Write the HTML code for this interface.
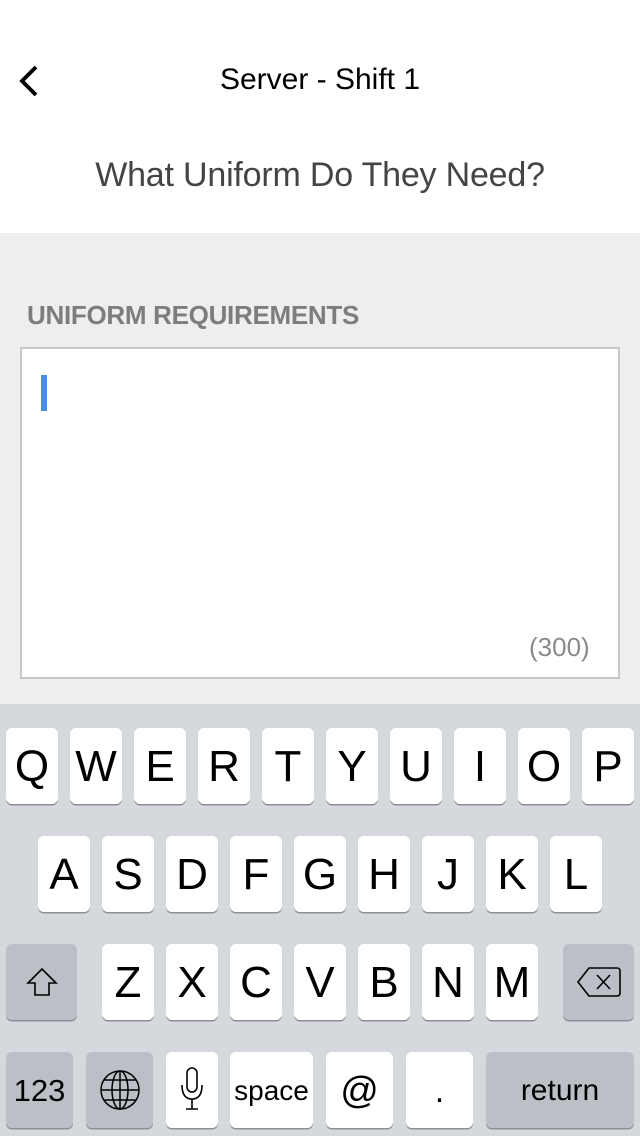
<!DOCTYPE html>
<html><head><meta charset="utf-8"><style>
*{margin:0;padding:0;box-sizing:border-box}
body{width:640px;height:1136px;position:relative;overflow:hidden;background:#fff;font-family:"Liberation Sans",sans-serif}
.abs{position:absolute}
.k{position:absolute;background:#fff;border-radius:6px;box-shadow:0 1.5px 0 #8e9096;text-align:center;color:#000;font-size:44px;line-height:78px;height:76px;width:52px}
.g{background:#bcc0c6}
</style></head><body>
<svg class="abs" style="left:16px;top:64px" width="26" height="36"><path d="M20 3 L6 17 L20 31" stroke="#000" stroke-width="3.8" fill="none"/></svg>
<div class="abs" style="left:0;width:640px;top:63px;text-align:center;font-size:30px;color:#000">Server - Shift 1</div>
<div class="abs" style="left:0;width:640px;top:156px;text-align:center;font-size:34px;color:#444;letter-spacing:-0.2px">What Uniform Do They Need?</div>
<div class="abs" style="left:0;top:233px;width:640px;height:471px;background:#eeeeee"></div>
<div class="abs" style="left:27px;top:300px;font-size:26px;font-weight:bold;color:#7d7d7d;letter-spacing:-0.3px">UNIFORM REQUIREMENTS</div>
<div class="abs" style="left:20px;top:347px;width:600px;height:332px;background:#fff;border:2px solid #c9c9c9"></div>
<div class="abs" style="left:41px;top:375px;width:6px;height:36px;background:#4a90e2"></div>
<div class="abs" style="left:529px;top:632px;font-size:26px;color:#8a8a8a">(300)</div>
<div class="abs" style="left:0;top:704px;width:640px;height:432px;background:#d5d8dc"></div>
<div class="k" style="left:6px;top:728px">Q</div><div class="k" style="left:70px;top:728px">W</div><div class="k" style="left:134px;top:728px">E</div><div class="k" style="left:198px;top:728px">R</div><div class="k" style="left:262px;top:728px">T</div><div class="k" style="left:326px;top:728px">Y</div><div class="k" style="left:390px;top:728px">U</div><div class="k" style="left:454px;top:728px">I</div><div class="k" style="left:518px;top:728px">O</div><div class="k" style="left:582px;top:728px">P</div>
<div class="k" style="left:38px;top:836px">A</div><div class="k" style="left:102px;top:836px">S</div><div class="k" style="left:166px;top:836px">D</div><div class="k" style="left:230px;top:836px">F</div><div class="k" style="left:294px;top:836px">G</div><div class="k" style="left:358px;top:836px">H</div><div class="k" style="left:422px;top:836px">J</div><div class="k" style="left:486px;top:836px">K</div><div class="k" style="left:550px;top:836px">L</div>
<div class="k g" style="left:6px;top:944px;width:71px"><svg width="40" height="40" style="margin-top:18px"><path d="M20 7 L34 21 L27 21 L27 33 L13 33 L13 21 L6 21 Z" fill="none" stroke="#000" stroke-width="1.6"/></svg></div>
<div class="k" style="left:102px;top:944px">Z</div><div class="k" style="left:166px;top:944px">X</div><div class="k" style="left:230px;top:944px">C</div><div class="k" style="left:294px;top:944px">V</div><div class="k" style="left:358px;top:944px">B</div><div class="k" style="left:422px;top:944px">N</div><div class="k" style="left:486px;top:944px">M</div>
<div class="k g" style="left:563px;top:944px;width:71px"><svg width="48" height="40" style="margin-top:18px"><path d="M14 6 L42 6 Q45 6 45 9 L45 31 Q45 34 42 34 L14 34 L3 20 Z" fill="none" stroke="#000" stroke-width="1.6"/><path d="M22 13 L35 27 M35 13 L22 27" stroke="#000" stroke-width="1.6"/></svg></div>
<div class="k g" style="left:6px;top:1052px;width:67px;font-size:31px">123</div>
<div class="k g" style="left:86px;top:1052px;width:67px"><svg width="44" height="44" style="margin-top:16px"><g fill="none" stroke="#000" stroke-width="1.5"><circle cx="22" cy="22" r="19"/><ellipse cx="22" cy="22" rx="8" ry="19"/><path d="M22 3 V41 M3 22 H41 M6 12 H38 M6 32 H38"/></g></svg></div>
<div class="k" style="left:166px;top:1052px"><svg width="30" height="50" style="margin-top:13px"><g fill="none" stroke="#000" stroke-width="1.6"><rect x="10" y="3" width="10" height="24" rx="5"/><path d="M5 20 Q5 34 15 34 Q25 34 25 20 M15 34 V44 M9 44 H21"/></g></svg></div>
<div class="k" style="left:230px;top:1052px;width:83px;font-size:28px">space</div>
<div class="k" style="left:326px;top:1052px;width:67px;font-size:38px">@</div>
<div class="k" style="left:406px;top:1052px;width:67px;font-size:34px">.</div>
<div class="k g" style="left:486px;top:1052px;width:148px;font-size:30px">return</div>
</body></html>
